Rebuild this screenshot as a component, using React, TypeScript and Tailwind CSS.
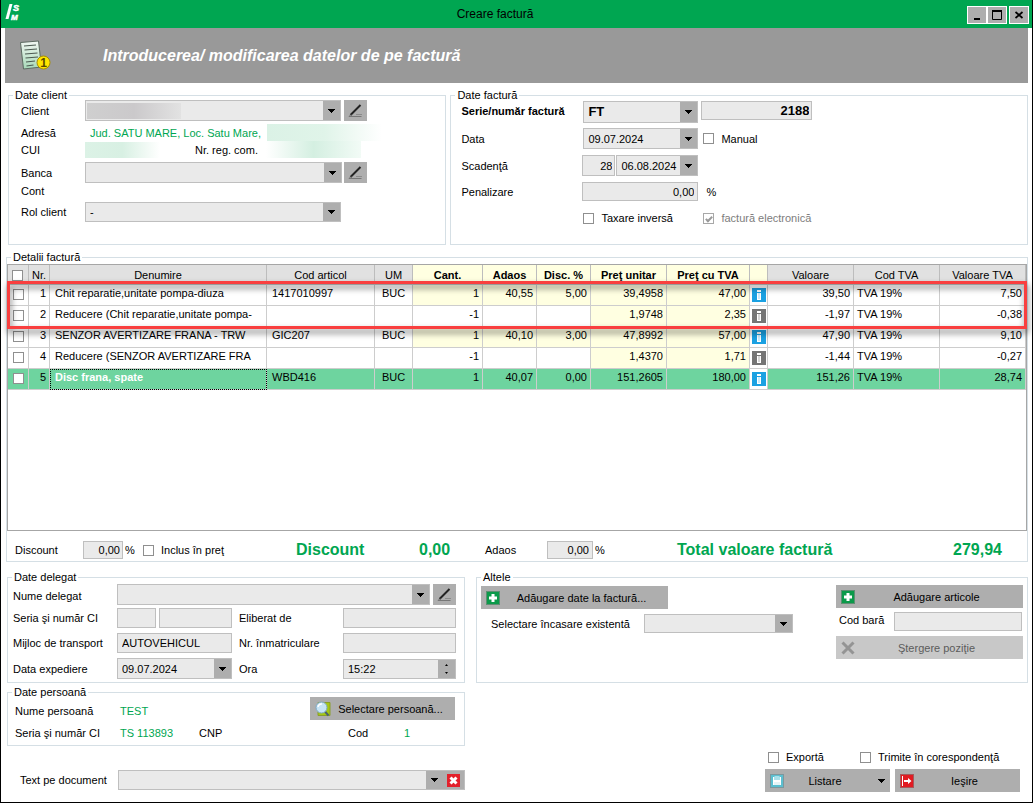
import { useId, type ReactNode } from 'react'
import clsx from 'clsx'

const ArrowDown = () => (
  <svg width="7" height="4" viewBox="0 0 7 4" shapeRendering="crispEdges">
    <path d="M0 0h7v1h-1v1h-1v1h-1v1h-1v-1h-1v-1h-1v-1h-1z" fill="#000" />
  </svg>
)

const PencilIcon = () => (
  <svg width="15" height="15" viewBox="0 0 15 15">
    <path d="M2.500 12L12.500 2" stroke="#222" strokeWidth="2" />
    <path d="M1 13.500l2-2" stroke="#777" />
    <path d="M1 13.500h12.500" stroke="#777" />
    <path d="M8 11.500h6" stroke="#8b8b8b" />
  </svg>
)

const PlusIcon = () => (
  <svg width="14" height="14" viewBox="0 0 14 14">
    <rect x=".5" y=".5" width="13" height="13" fill="#0b9a4a" stroke="#5f8f73" />
    <path d="M5.5 3h3v2.5H11v3H8.500V11h-3V8.500H3v-3h2.500z" fill="#fff" />
  </svg>
)

const CrossIcon = () => (
  <svg width="14" height="14" viewBox="0 0 14 14">
    <path d="M1.500 1.500l11 11M12.500 1.500l-11 11" stroke="#949494" strokeWidth="3" />
  </svg>
)

const SearchIcon = () => (
  <svg width="16" height="16" viewBox="0 0 16 16">
    <path d="M3 1.500h12v13H3z" fill="#a5c715" stroke="#8a9d2c" />
    <path d="M9.500 10l4 4.500" stroke="#4b6170" strokeWidth="2" />
    <circle cx="6.500" cy="6.500" r="5.500" fill="#c6e4f6" stroke="#7fa9c4" />
    <path d="M3 6a3.500 3.500 0 0 1 4-3" stroke="#fff" strokeWidth="1.500" fill="none" />
  </svg>
)

const SaveIcon = () => (
  <svg width="14" height="14" viewBox="0 0 14 14">
    <rect x=".5" y=".5" width="13" height="13" fill="#5cbfd0" stroke="#7d979c" />
    <path d="M3 3h1.500v3h5V3H11v8H3z" fill="#fff" />
    <path d="M4.500 2h5v4h-5z" fill="#a9e0ea" />
    <path d="M4 8h6v3H4z" fill="#e6f4f6" />
  </svg>
)

const ExitIcon = () => (
  <svg width="14" height="14" viewBox="0 0 14 14">
    <rect x=".5" y=".5" width="13" height="13" fill="#e11b22" stroke="#a55a5c" />
    <path d="M2 2h1v10H2zM4 6h4V4l3.500 3L8 10V8H4z" fill="#fff" />
  </svg>
)

const DeleteIcon = () => (
  <svg width="13" height="13" viewBox="0 0 13 13">
    <rect width="13" height="13" fill="#e3202b" />
    <path d="M3.500 3.500l6 6M9.500 3.500l-6 6" stroke="#fff" strokeWidth="3" />
  </svg>
)

const InfoIcon = ({ active }: { active: boolean }) => (
  <svg width="14" height="14" viewBox="0 0 14 14" className="mx-auto block">
    <rect width="14" height="14" fill={active ? '#1ba1e2' : '#757575'} />
    <path d="M5 2h4v2H5zM5 5h4v7H5z" fill="#fff" />
    <path d="M6 5h2v6H6z" fill={active ? '#cdeafa' : '#d6d6d6'} />
  </svg>
)

const LogoIcon = () => (
  <svg width="17" height="20" viewBox="0 0 17 20" fontFamily="Liberation Sans, Arial, sans-serif" fontStyle="italic" fontWeight="700" fill="#fff">
    <path d="M4.500 0h3L3.500 15h-3z" />
    <text x="8" y="7" fontSize="9" stroke="#fff" strokeWidth=".5">S</text>
    <text x="6" y="16" fontSize="8" stroke="#fff" strokeWidth=".5">M</text>
  </svg>
)

const InvoiceIcon = () => (
  <svg width="32" height="32" viewBox="0 0 32 32">
    <defs>
      <linearGradient id="paper" x1="0" y1="0" x2="0" y2="1">
        <stop offset="0" stopColor="#f1f7f2" />
        <stop offset="1" stopColor="#a7d9b8" />
      </linearGradient>
    </defs>
    <path d="M.5 2.500L18.500 1 21.500 27 3.500 29z" fill="url(#paper)" stroke="#5c6b61" />
    <path d="M4 6l12-1M4.500 10l12.500-1M5 14l12.500-1M5.500 18l12.500-1M6 22l9-1M6.500 26l7-1" stroke="#4c5a51" strokeWidth="1.200" />
    <circle cx="23.500" cy="22.500" r="6.500" fill="#ffe600" stroke="#a98f00" />
    <text x="23.500" y="27" textAnchor="middle" fontSize="12" fontWeight="700" fontFamily="Liberation Sans, Arial, sans-serif" fill="#5b4a00">1</text>
  </svg>
)

const Group = ({ title, className, children }: { title: string; className?: string; children: ReactNode }) => (
  <fieldset className="min-w-0 border border-[#d5dfe5]">
    <legend className="ml-1 px-[2px] leading-[9px]">{title}</legend>
    <div className={className}>{children}</div>
  </fieldset>
)

interface SelectProps {
  label: string
  id?: string
  value?: string
  className?: string
  children?: ReactNode
}

const Select = ({ label, id, value = '', className, children }: SelectProps) => (
  <div className={clsx('grid min-w-0 border border-[#bfbfbf] bg-[#eaeaea] *:[grid-area:1/1]', className)}>
    <select id={id} aria-label={label} className="w-full min-w-0 appearance-none bg-transparent pl-1 outline-none">
      <option>{value}</option>
    </select>
    {children}
    <span className="pointer-events-none flex w-[17px] items-center justify-center justify-self-end bg-[#aeaeae]">
      <ArrowDown />
    </span>
  </div>
)

interface TextBoxProps {
  label: string
  id?: string
  value?: string
  className?: string
}

const TextBox = ({ label, id, value = '', className }: TextBoxProps) => (
  <input
    id={id}
    aria-label={label}
    type="text"
    defaultValue={value}
    className={clsx('min-w-0 border border-[#bfbfbf] bg-[#eaeaea] outline-none', className)}
  />
)

const boxStyle =
  "grid size-[11px] shrink-0 appearance-none place-items-center border border-[#8f8f8f] bg-white disabled:border-[#a8a8a8] checked:before:h-[7px] checked:before:w-[4px] checked:before:rotate-45 checked:before:border-r-2 checked:before:border-b-2 checked:before:border-[#9a9a9a] checked:before:content-['']"

const CheckBox = ({ label, checked, disabled, className }: { label: string; checked?: boolean; disabled?: boolean; className?: string }) => {
  const id = useId()
  return (
    <div className={clsx('flex items-center gap-[7px]', disabled && 'text-[#7d7d7d]', className)}>
      <input id={id} type="checkbox" defaultChecked={checked} disabled={disabled} className={boxStyle} />
      <label htmlFor={id} className="whitespace-nowrap">{label}</label>
    </div>
  )
}

const EditButton = ({ label }: { label: string }) => (
  <button type="button" aria-label={label} className="flex h-[21px] w-[23px] shrink-0 items-center justify-center bg-[#aeaeae]">
    <PencilIcon />
  </button>
)

interface ActionButtonProps {
  icon: ReactNode
  label: string
  arrow?: boolean
  disabled?: boolean
  className?: string
}

const ActionButton = ({ icon, label, arrow, disabled, className }: ActionButtonProps) => (
  <button
    type="button"
    disabled={disabled}
    className={clsx('flex h-[23px] items-center bg-[#aeaeae] px-[5px] disabled:bg-[#c8c8c8] disabled:text-[#5c5c5c]', className)}
  >
    {icon}
    <span className={clsx('flex-1 text-center', arrow && 'pr-3')}>{label}</span>
    {arrow && <ArrowDown />}
  </button>
)

const ClientGroup = () => (
  <Group title="Date client" className="pb-[22px] pl-3">
    <div className="flex items-center">
      <label htmlFor="client" className="w-16 shrink-0">Client</label>
      <Select id="client" label="Client" className="mr-[3px] h-[21px] w-64">
        <span className="pointer-events-none ml-px h-4 w-[94px] self-center bg-linear-to-r from-[#cfcfcf] via-[#cbc9cb] to-[#e2e2e2]" />
      </Select>
      <EditButton label="Modificare client" />
    </div>
    <div className="mt-[3px] flex h-[17px] items-center">
      <span className="w-16 shrink-0">Adresă</span>
      <span className="ml-[5px] w-[177px] whitespace-nowrap text-[#00a651]">Jud. SATU MARE, Loc. Satu Mare,</span>
      <span className="h-[17px] w-[115px] bg-linear-to-r from-[#dbf2e6] via-[#e0f4e9] to-white" />
    </div>
    <div className="flex h-[17px] items-center">
      <span className="w-16 shrink-0">CUI</span>
      <span className="h-4 w-[75px] bg-linear-to-r from-[#dcf2e6] via-[#d8f0e3] to-white" />
      <span className="ml-[35px] w-[71px] whitespace-nowrap">Nr. reg. com.</span>
      <span className="h-[17px] w-[95px] bg-linear-to-r from-white via-[#d4efe1] to-[#f2fbf6]" />
    </div>
    <div className="mt-1 flex items-center">
      <label htmlFor="banca" className="w-16 shrink-0">Banca</label>
      <Select id="banca" label="Banca" className="mr-[2px] h-[21px] w-[257px]" />
      <EditButton label="Modificare banca" />
    </div>
    <div className="h-4 leading-4">Cont</div>
    <div className="mt-[3px] flex items-center">
      <label htmlFor="rol" className="w-16 shrink-0">Rol client</label>
      <Select id="rol" label="Rol client" value="-" className="h-5 w-64" />
    </div>
  </Group>
)

const InvoiceGroup = () => (
  <Group title="Date factură" className="pl-[10px]">
    <div className="mt-px flex items-start font-bold">
      <label htmlFor="serie" className="w-[122px] shrink-0 leading-5">Serie/număr factură</label>
      <Select id="serie" label="Serie" value="FT" className="mr-[3px] h-[22px] w-[115px] text-[13px]" />
      <TextBox label="Număr factură" value="2188" className="h-[19px] w-[111px] px-[2px] text-right text-[13px]" />
    </div>
    <div className="mt-[5px] flex items-center">
      <label htmlFor="data" className="w-[122px] shrink-0">Data</label>
      <Select id="data" label="Data" value="09.07.2024" className="mr-[5px] h-[21px] w-[115px]" />
      <CheckBox label="Manual" />
    </div>
    <div className="mt-[6px] flex items-center">
      <label htmlFor="zile" className="w-[121px] shrink-0">Scadenţă</label>
      <TextBox id="zile" label="Zile scadenţă" value="28" className="mr-px h-[21px] w-[33px] px-[2px] text-right" />
      <Select label="Data scadenţei" value="06.08.2024" className="h-[21px] w-[82px]" />
    </div>
    <div className="mt-[6px] flex items-center">
      <label htmlFor="penalizare" className="w-[121px] shrink-0">Penalizare</label>
      <TextBox id="penalizare" label="Penalizare" value="0,00" className="mr-2 h-[19px] w-[116px] px-[3px] text-right" />
      <span>%</span>
    </div>
    <div className="mt-[9px] ml-[122px] flex">
      <CheckBox label="Taxare inversă" className="w-[120px]" />
      <CheckBox label="factură electronică" checked disabled />
    </div>
  </Group>
)

interface Line {
  name: string
  code: string
  unit: string
  qty: string
  markup: string
  discount: string
  price: string
  gross: string
  value: string
  vat: string
}

const lines: Line[] = [
  { name: 'Chit reparatie,unitate pompa-diuza', code: '1417010997', unit: 'BUC', qty: '1', markup: '40,55', discount: '5,00', price: '39,4958', gross: '47,00', value: '39,50', vat: '7,50' },
  { name: 'Reducere (Chit reparatie,unitate pompa-', code: '', unit: '', qty: '-1', markup: '', discount: '', price: '1,9748', gross: '2,35', value: '-1,97', vat: '-0,38' },
  { name: 'SENZOR AVERTIZARE FRANA - TRW', code: 'GIC207', unit: 'BUC', qty: '1', markup: '40,10', discount: '3,00', price: '47,8992', gross: '57,00', value: '47,90', vat: '9,10' },
  { name: 'Reducere (SENZOR AVERTIZARE FRA', code: '', unit: '', qty: '-1', markup: '', discount: '', price: '1,4370', gross: '1,71', value: '-1,44', vat: '-0,27' },
  { name: 'Disc frana, spate', code: 'WBD416', unit: 'BUC', qty: '1', markup: '40,07', discount: '0,00', price: '151,2605', gross: '180,00', value: '151,26', vat: '28,74' },
]

const columns = [
  { title: 'Nr.', width: 'w-[21px]' },
  { title: 'Denumire', width: '' },
  { title: 'Cod articol', width: 'w-[108px]' },
  { title: 'UM', width: 'w-[38px]' },
  { title: 'Cant.', width: 'w-[70px]', editable: true },
  { title: 'Adaos', width: 'w-[54px]', editable: true },
  { title: 'Disc. %', width: 'w-[54px]', editable: true },
  { title: 'Preţ unitar', width: 'w-[76px]', editable: true },
  { title: 'Preţ cu TVA', width: 'w-[83px]', editable: true },
  { title: '', width: 'w-[18px]', editable: true },
  { title: 'Valoare', width: 'w-[86px]' },
  { title: 'Cod TVA', width: 'w-[86px]' },
  { title: 'Valoare TVA', width: 'w-[86px]' },
]

const LinesTable = () => (
  <div className="relative h-[267px] border border-[#a6a6a6]">
    <table className="w-full table-fixed border-separate border-spacing-0">
      <thead>
        <tr className="h-5 *:border-r *:border-b *:border-[#bdbdbd] *:px-0 *:pt-[2px] *:pb-0 *:leading-[17px]">
          <th className="w-[21px] bg-[#e1e1e1]">
            <input type="checkbox" aria-label="Selectare toate" className={clsx(boxStyle, 'ml-1')} />
          </th>
          {columns.map(({ title, width, editable }, i) => (
            <th key={i} className={clsx('whitespace-nowrap', width, editable ? 'bg-[#ffffe1] font-bold' : 'bg-[#e1e1e1] font-normal')}>
              {title}
            </th>
          ))}
        </tr>
      </thead>
      <tbody>
        {lines.map((line, i) => {
          const selected = i === lines.length - 1
          const reduction = line.qty === '-1'
          const cream = !selected && 'bg-[#ffffe1]'
          const editable = !reduction && cream
          return (
            <tr
              key={i}
              className={clsx(
                'h-[21px] *:overflow-hidden *:border-r *:border-b *:border-[#cdcdcd] *:p-0 *:align-top *:leading-4 *:whitespace-nowrap',
                selected && 'bg-[#6ed49f]',
              )}
            >
              <td>
                <input type="checkbox" aria-label={`Selectare ${line.name}`} className={clsx(boxStyle, 'mt-1 ml-[5px]')} />
              </td>
              <td className="text-right"><span className="pr-[3px]">{i + 1}</span></td>
              <td className={clsx(selected && 'font-bold text-white outline-1 -outline-offset-1 outline-dotted outline-black')}>
                <span className="pl-[5px]">{line.name}</span>
              </td>
              <td><span className="pl-[5px]">{line.code}</span></td>
              <td className="text-center">{line.unit}</td>
              <td className={clsx('text-right', editable)}><span className="pr-[3px]">{line.qty}</span></td>
              <td className={clsx('text-right', editable)}><span className="pr-[3px]">{line.markup}</span></td>
              <td className={clsx('text-right', editable)}><span className="pr-[3px]">{line.discount}</span></td>
              <td className={clsx('text-right', cream)}><span className="pr-[3px]">{line.price}</span></td>
              <td className={clsx('text-right', cream)}><span className="pr-[3px]">{line.gross}</span></td>
              <td className="bg-white">
                <div className="pt-[3px]"><InfoIcon active={!reduction} /></div>
              </td>
              <td className="text-right"><span className="pr-[3px]">{line.value}</span></td>
              <td><span className="pl-[3px]">TVA 19%</span></td>
              <td className="text-right"><span className="pr-[3px]">{line.vat}</span></td>
            </tr>
          )
        })}
      </tbody>
    </table>
    <div className="pointer-events-none absolute -inset-x-px top-4 h-12 border-[3px] border-[#f93f3f] drop-shadow-[1px_4px_3px_rgba(0,0,0,0.6)]" />
  </div>
)

const DetailsGroup = () => (
  <Group title="Detalii factură" className="pt-[2px]">
    <LinesTable />
    <div className="flex h-[30px] items-center pt-2 pr-[25px] pl-2">
      <label htmlFor="discount" className="w-[68px]">Discount</label>
      <TextBox id="discount" label="Discount" value="0,00" className="mr-[2px] h-[18px] w-10 px-[2px] text-right" />
      <span className="w-[18px]">%</span>
      <CheckBox label="Inclus în preţ" className="w-[153px]" />
      <span className="w-[123px] text-base font-bold text-[#00a651]">Discount</span>
      <span className="w-[66px] text-base font-bold text-[#00a651]">0,00</span>
      <label htmlFor="adaos" className="w-[62px]">Adaos</label>
      <TextBox id="adaos" label="Adaos" value="0,00" className="mr-[2px] h-[18px] w-[46px] px-[3px] text-right" />
      <span className="w-[82px]">%</span>
      <span className="text-base font-bold whitespace-nowrap text-[#00a651]">Total valoare factură</span>
      <span className="ml-auto text-base font-bold text-[#00a651]">279,94</span>
    </div>
  </Group>
)

const DelegateGroup = () => (
  <Group title="Date delegat" className="pb-[3px] pl-[5px]">
    <div className="mt-[2px] flex items-center pr-2">
      <label htmlFor="delegat" className="w-[104px] shrink-0 pt-[3px]">Nume delegat</label>
      <Select id="delegat" label="Nume delegat" className="mr-[3px] h-[21px] flex-1" />
      <EditButton label="Modificare delegat" />
    </div>
    <div className="mt-[3px] flex items-center pr-2">
      <label htmlFor="seria" className="w-[104px] shrink-0">Seria şi număr CI</label>
      <TextBox id="seria" label="Seria CI" className="mr-[3px] h-5 w-[39px]" />
      <TextBox label="Număr CI" className="mr-[7px] h-5 w-[73px]" />
      <label htmlFor="eliberat" className="w-[104px] shrink-0">Eliberat de</label>
      <TextBox id="eliberat" label="Eliberat de" className="h-5 flex-1" />
    </div>
    <div className="mt-[5px] flex items-center pr-2">
      <label htmlFor="transport" className="w-[104px] shrink-0">Mijloc de transport</label>
      <TextBox id="transport" label="Mijloc de transport" value="AUTOVEHICUL" className="mr-[7px] h-5 w-[115px] px-1" />
      <label htmlFor="inmatriculare" className="w-[104px] shrink-0">Nr. înmatriculare</label>
      <TextBox id="inmatriculare" label="Nr. înmatriculare" className="h-5 flex-1" />
    </div>
    <div className="mt-[5px] flex items-center pr-2">
      <label htmlFor="expediere" className="w-[104px] shrink-0">Data expediere</label>
      <Select id="expediere" label="Data expediere" value="09.07.2024" className="mr-[7px] h-[21px] w-[115px]" />
      <label htmlFor="ora" className="w-[104px] shrink-0">Ora</label>
      <div className="flex h-5 flex-1 border border-[#bfbfbf] bg-[#eaeaea]">
        <input id="ora" type="text" defaultValue="15:22" className="w-0 flex-1 px-1 outline-none" />
        <div className="flex w-[17px] flex-col items-center justify-center gap-[6px] bg-[#aeaeae]">
          <button type="button" aria-label="Ora mai târziu">
            <svg width="3" height="2" viewBox="0 0 3 2" className="block"><path d="M0 2h3L1.500 0z" /></svg>
          </button>
          <button type="button" aria-label="Ora mai devreme">
            <svg width="3" height="2" viewBox="0 0 3 2" className="block"><path d="M0 0h3L1.500 2z" /></svg>
          </button>
        </div>
      </div>
    </div>
  </Group>
)

const PersonGroup = () => (
  <Group title="Date persoană" className="pb-1 pl-[7px]">
    <div className="flex items-center pr-[9px]">
      <span className="w-[105px] pt-1">Nume persoană</span>
      <span className="pt-1 text-[#00a651]">TEST</span>
      <ActionButton icon={<SearchIcon />} label="Selectare persoană..." className="ml-auto w-[145px]" />
    </div>
    <div className="flex h-[21px] items-center pt-1">
      <span className="w-[105px]">Seria şi număr CI</span>
      <span className="w-[79px] text-[#00a651]">TS 113893</span>
      <span className="w-[149px]">CNP</span>
      <span className="w-14">Cod</span>
      <span className="text-[#00a651]">1</span>
    </div>
  </Group>
)

const OthersGroup = () => (
  <Group title="Altele" className="pb-[23px]">
    <div className="flex justify-between pt-[3px] pr-1 pl-1">
      <div className="pt-px">
        <ActionButton icon={<PlusIcon />} label="Adăugare date la factură..." className="w-[187px]" />
        <div className="mt-[5px] flex items-center pl-[10px]">
          <label htmlFor="incasare" className="w-[153px]">Selectare încasare existentă</label>
          <Select id="incasare" label="Selectare încasare existentă" className="h-[19px] w-[149px]" />
        </div>
      </div>
      <div className="w-[187px]">
        <ActionButton icon={<PlusIcon />} label="Adăugare articole" className="w-full" />
        <div className="mt-1 flex pr-px pl-[3px]">
          <label htmlFor="codbara" className="w-[55px] leading-4">Cod bară</label>
          <TextBox id="codbara" label="Cod bară" className="h-[19px] flex-1" />
        </div>
        <ActionButton icon={<CrossIcon />} label="Ştergere poziţie" disabled className="mt-[5px] w-full" />
      </div>
    </div>
  </Group>
)

const TitleBar = () => (
  <header className="grid h-7 grid-cols-[1fr_auto_1fr] items-center bg-[#00a651] pr-[3px] pl-1">
    <LogoIcon />
    <h1 className="pr-11 text-xs">Creare factură</h1>
    <div className="flex justify-end pt-[2px] *:flex *:h-[18px] *:items-center *:justify-center *:border *:border-white *:bg-[#aeaeae]">
      <button type="button" aria-label="Minimizare" className="w-5">
        <svg width="12" height="12" viewBox="0 0 12 12"><path d="M3 9h6v2H3z" /></svg>
      </button>
      <button type="button" aria-label="Maximizare" className="mr-[2px] w-5">
        <svg width="10" height="10" viewBox="0 0 10 10"><path d="M.5 1.500h9v8h-9z" fill="none" stroke="#000" /><path d="M0 0h10v2H0z" /></svg>
      </button>
      <button type="button" aria-label="Închidere" className="w-5">
        <svg width="10" height="10" viewBox="0 0 10 10"><path d="M1.500 2l7 6M8.500 2l-7 6" stroke="#000" strokeWidth="1.700" /></svg>
      </button>
    </div>
  </header>
)

const App = () => (
  <div className="border border-t-0 border-black bg-white font-['Liberation_Sans',Arial,sans-serif] text-[11px] leading-4 text-black">
    <TitleBar />
    <div className="mx-1 flex h-[55px] items-center bg-[#999] pl-[15px]">
      <InvoiceIcon />
      <h2 className="ml-[51px] text-base font-bold text-white italic">Introducerea/ modificarea datelor de pe factură</h2>
    </div>
    <main className="px-1 pt-2 pb-3">
      <div className="grid grid-cols-[minmax(0,438fr)_minmax(0,577fr)] gap-1 pl-[3px]">
        <ClientGroup />
        <InvoiceGroup />
      </div>
      <div className="mt-2 pl-px">
        <DetailsGroup />
      </div>
      <div className="mt-[11px] grid grid-cols-[minmax(0,458fr)_minmax(0,552fr)] gap-x-[11px] pl-[2px]">
        <div>
          <DelegateGroup />
          <div className="mt-[5px]">
            <PersonGroup />
          </div>
          <div className="mt-6 flex items-center pl-[13px]">
            <label htmlFor="text" className="w-[98px] shrink-0">Text pe document</label>
            <div className="flex h-5 flex-1 border border-[#bfbfbf] bg-[#aeaeae]">
              <Select id="text" label="Text pe document" className="flex-1 border-0" />
              <button type="button" aria-label="Ştergere text" className="flex w-[21px] items-center justify-center">
                <DeleteIcon />
              </button>
            </div>
          </div>
        </div>
        <div className="flex flex-col justify-between">
          <OthersGroup />
          <div className="mr-2 -mb-[2px] self-end">
            <div className="flex pl-[3px]">
              <CheckBox label="Exportă" className="w-[92px]" />
              <CheckBox label="Trimite în corespondenţă" />
            </div>
            <div className="mt-1 flex gap-[5px]">
              <ActionButton icon={<SaveIcon />} label="Listare" arrow className="h-6 w-[125px]" />
              <ActionButton icon={<ExitIcon />} label="Ieşire" className="h-6 w-[125px]" />
            </div>
          </div>
        </div>
      </div>
    </main>
  </div>
)

export default App
